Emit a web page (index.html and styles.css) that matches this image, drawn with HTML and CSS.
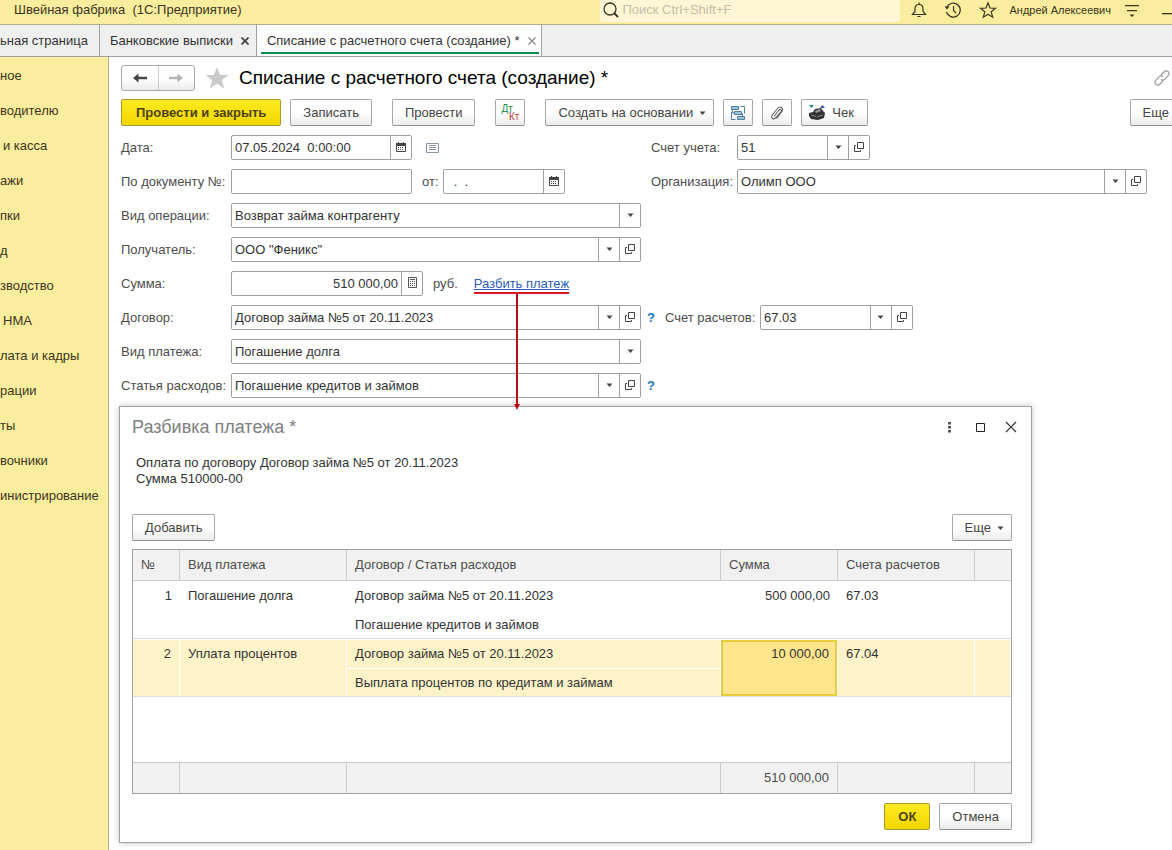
FILE: index.html
```html
<!DOCTYPE html>
<html lang="ru">
<head>
<meta charset="utf-8">
<title>Списание с расчетного счета (создание) *</title>
<link rel="stylesheet" href="styles.css">
</head>
<body>
<svg class="sprite" aria-hidden="true">
  <symbol id="i-down" viewBox="0 0 7 4"><path d="M0.5 0.5h6L3.5 4z" fill="#444"/></symbol>
  <symbol id="i-open" viewBox="0 0 10 10"><path d="M3.500 0.500h6v6h-6zM2 3.500H0.500v6h6V8" fill="none" stroke="#444"/></symbol>
  <symbol id="i-cal" viewBox="0 0 10 10"><path d="M0.500 1.500h9v8h-9z" fill="#fff" stroke="#444"/><path d="M0 1h10v3H0zM2 0h1v2H2zM7 0h1v2H7z" fill="#444"/><path d="M2 5h1v1H2zM4 5h1v1H4zM6 5h1v1H6zM2 7h1v1H2zM4 7h1v1H4zM6 7h1v1H6z" fill="#444"/></symbol>
</svg>

<header class="titlebar">
  <span class="app-name">Швейная фабрика&nbsp; (1С:Предприятие)</span>
  <label class="search">
    <svg width="18" height="18" viewBox="0 0 18 18" fill="none" stroke="#3a3520"><circle cx="8" cy="8" r="6" stroke-width="1.300"/><path d="M12 12l4 4" stroke-width="2"/></svg>
    <input type="search" placeholder="Поиск Ctrl+Shift+F" aria-label="Поиск">
  </label>
  <nav class="title-tools">
    <button class="plain" aria-label="Уведомления"><svg width="16" height="18" viewBox="0 0 16 18" fill="none" stroke="#3a3520" stroke-width="1.200"><path d="M1.500 13.500h13l-2.500-3V7.500C12 5 10.500 3.500 8 3.500S4 5 4 7.500v3z"/><path d="M8 1.500v2M6.500 15.500h3"/></svg></button>
    <button class="plain" aria-label="История"><svg width="18" height="18" viewBox="0 0 18 18" fill="none" stroke="#3a3520" stroke-width="1.200"><path d="M3 6a7 7 0 1 1-0.500 5"/><path d="M9.500 5v4.500l2.500 2.500"/><path d="M0.500 5.500h5L3 8.500z" fill="#3a3520" stroke="none"/></svg></button>
    <button class="plain" aria-label="Избранное"><svg width="18" height="18" viewBox="0 0 18 18" fill="none" stroke="#3a3520" stroke-width="1.200"><path d="M9 1.800l2 5.200 5.500 0.300-4.300 3.500 1.500 5.400L9 13.200l-4.700 3 1.500-5.400L1.500 7.300 7 7z"/></svg></button>
  </nav>
  <span class="user">Андрей Алексеевич</span>
  <button class="plain menu" aria-label="Сервис"><svg width="16" height="16" viewBox="0 0 16 16"><path d="M1 3h14v1.300H1zM3 8h10v1.300H3zM5.500 12.500h5L8 15z" fill="#3a3520"/></svg></button>
  <button class="plain minimize" aria-label="Свернуть"><svg width="12" height="16" viewBox="0 0 12 16"><path d="M2 11h10v1.300H2z" fill="#3a3520"/></svg></button>
</header>

<nav class="tabs">
  <a class="tab first" href="#">ьная страница</a>
  <span class="tab"><a href="#">Банковские выписки</a><button class="plain" aria-label="Закрыть вкладку"><svg width="8" height="8" viewBox="0 0 8 8"><path d="M0.500 0.500l7 7M7.500 0.500l-7 7" stroke="#444" stroke-width="1.800"/></svg></button></span>
  <span class="tab active"><a href="#">Списание с расчетного счета (создание) *</a><button class="plain" aria-label="Закрыть вкладку"><svg width="8" height="8" viewBox="0 0 8 8"><path d="M0.500 0.500l7 7M7.500 0.500l-7 7" stroke="#888" stroke-width="1.300"/></svg></button></span>
</nav>

<div class="body">
  <nav class="sidebar">
    <a href="#">ное</a>
    <a href="#">водителю</a>
    <a href="#" class="in">и касса</a>
    <a href="#">ажи</a>
    <a href="#">пки</a>
    <a href="#">д</a>
    <a href="#">зводство</a>
    <a href="#" class="in">НМА</a>
    <a href="#">лата и кадры</a>
    <a href="#">рации</a>
    <a href="#">ты</a>
    <a href="#">вочники</a>
    <a href="#">инистрирование</a>
  </nav>

  <main>
    <div class="heading">
      <div class="history">
        <button aria-label="Назад"><svg width="14" height="10" viewBox="0 0 14 10"><path d="M0 5l5.500-4.500v3.300H14v2.400H5.500v3.300z" fill="#444"/></svg></button>
        <button aria-label="Вперед"><svg width="14" height="10" viewBox="0 0 14 10"><path d="M14 5L8.500 0.500v3.300H0v2.400h8.500v3.300z" fill="#b5b5b5"/></svg></button>
      </div>
      <svg class="fav" width="24" height="22" viewBox="0 0 24 22"><path d="M12 0l3 8h8.500l-6.800 5.200 2.600 8.300L12 16.500l-7.300 5 2.600-8.300L0.500 8H9z" fill="#c9c9c9"/></svg>
      <h1>Списание с расчетного счета (создание) *</h1>
      <button class="plain link" aria-label="Ссылка"><svg width="16" height="18" viewBox="0 0 16 18" fill="none" stroke="#999" stroke-width="1.200"><path d="M7 6l3-3c1.500-1.500 3-1.500 4.200-0.300s1 2.800-0.300 4.200l-3 3.200c-1.400 1.400-2.900 1.200-3.900 0.400"/><path d="M9 12l-3 3c-1.400 1.400-3 1.400-4.200 0.300s-1-2.800 0.300-4.200l3-3.200C6.500 6.600 8 6.700 9 7.600"/></svg></button>
    </div>

    <div class="toolbar">
      <button class="btn primary">Провести и закрыть</button>
      <button class="btn">Записать</button>
      <button class="btn wide-gap">Провести</button>
      <button class="btn icon wide-gap" aria-label="Дт Кт"><span class="dtkt"><span class="dt">Дт</span><span class="kt">Кт</span></span></button>
      <button class="btn caret wide-gap">Создать на основании<svg width="7" height="4"><use href="#i-down"/></svg></button>
      <button class="btn icon" aria-label="Структура подчиненности"><svg width="16" height="16" viewBox="0 0 16 16" fill="#9cc4dd" stroke="#4d7f9f"><path d="M1.500 1.500h7v3h-7zM4.500 6.500h7v3h-7zM7.500 11.500h7v3h-7z"/><path d="M10.500 1.500h4v7M1.500 7v7.500h4M2.500 5v3h2M11.500 8.500h1v3" fill="none"/></svg></button>
      <button class="btn icon" aria-label="Файлы"><svg width="14" height="16" viewBox="0 0 14 16" fill="none" stroke="#666" stroke-width="1.100"><path d="M4 11.500l5-6.500c1.500-1.500 3 0 2 1.500L5.500 13C3.500 15 0.500 13 2 10.500L7.500 3.500c2.500-3.200 6.500-0.500 4.500 3l-5.500 7.200"/></svg></button>
      <button class="btn check"><svg width="18" height="18" viewBox="0 0 18 18"><path d="M1 1h5L3.500 4z" fill="#2a9060"/><path d="M12 4h5L14.500 1z" fill="#39549a"/><path d="M1 9l4-1 2-3 6-1 2 3 2 2-1 5-6 2-7-1-2-3z" fill="#333"/><path d="M7 7l5-2 1 2-5 2z" fill="#999"/><path d="M3 11l5 1.500M9 13l6-2" stroke="#888"/></svg>Чек</button>
      <button class="btn more-main">Еще</button>
    </div>

    <form class="form">
      <div class="row">
        <div class="left">
          <label for="date">Дата:</label>
          <div class="field w-date"><input id="date" value="07.05.2024  0:00:00"><button type="button" aria-label="Календарь"><svg width="10" height="10"><use href="#i-cal"/></svg></button></div>
          <svg class="note" width="13" height="10" viewBox="0 0 13 10"><path d="M0.500 0.500h12v9h-12z" fill="#fff" stroke="#8593a0"/><path d="M3 2.500h7M3 4.500h7M3 6.500h7" stroke="#8593a0"/></svg>
        </div>
        <label class="side" for="account">Счет учета:</label>
        <div class="field w-account"><input id="account" value="51"><button type="button" aria-label="Выбрать"><svg width="7" height="4"><use href="#i-down"/></svg></button><button type="button" aria-label="Открыть"><svg width="10" height="10"><use href="#i-open"/></svg></button></div>
      </div>

      <div class="row">
        <div class="left">
          <label for="docnum">По документу №:</label>
          <div class="field w-date"><input id="docnum"></div>
          <label class="from" for="docdate">от:</label>
          <div class="field w-from"><input id="docdate" value="  .  ."><button type="button" aria-label="Календарь"><svg width="10" height="10"><use href="#i-cal"/></svg></button></div>
        </div>
        <label class="side" for="org">Организация:</label>
        <div class="field grow"><input id="org" value="Олимп ООО"><button type="button" aria-label="Выбрать"><svg width="7" height="4"><use href="#i-down"/></svg></button><button type="button" aria-label="Открыть"><svg width="10" height="10"><use href="#i-open"/></svg></button></div>
      </div>

      <div class="row">
        <div class="left">
          <label for="optype">Вид операции:</label>
          <div class="field grow"><select id="optype"><option>Возврат займа контрагенту</option></select><span class="arrow"><svg width="7" height="4"><use href="#i-down"/></svg></span></div>
        </div>
      </div>

      <div class="row">
        <div class="left">
          <label for="payee">Получатель:</label>
          <div class="field grow"><input id="payee" value="ООО &quot;Феникс&quot;"><button type="button" aria-label="Выбрать"><svg width="7" height="4"><use href="#i-down"/></svg></button><button type="button" aria-label="Открыть"><svg width="10" height="10"><use href="#i-open"/></svg></button></div>
        </div>
      </div>

      <div class="row">
        <div class="left">
          <label for="sum">Сумма:</label>
          <div class="field w-sum"><input id="sum" class="num" value="510 000,00"><button type="button" aria-label="Калькулятор"><svg width="9" height="11" viewBox="0 0 9 11"><path d="M0.500 0.500h8v10h-8z" fill="none" stroke="#555"/><path d="M2 4.500h5M2 6.500h5M2 8.500h5" stroke="#555" stroke-dasharray="1 1"/><path d="M2 2.500h5" stroke="#555"/></svg></button></div>
          <span class="unit">руб.</span>
          <a class="split" href="#split">Разбить платеж
            <svg class="pointer" width="8" height="118" viewBox="0 0 8 118"><path d="M3 0h2v112H3z" fill="#b80d18"/><path d="M1 111h6L4 117z" fill="#b80d18"/></svg>
          </a>
        </div>
      </div>

      <div class="row">
        <div class="left">
          <label for="contract">Договор:</label>
          <div class="field grow"><input id="contract" value="Договор займа №5 от 20.11.2023"><button type="button" aria-label="Выбрать"><svg width="7" height="4"><use href="#i-down"/></svg></button><button type="button" aria-label="Открыть"><svg width="10" height="10"><use href="#i-open"/></svg></button></div>
        </div>
        <a class="help" href="#">?</a>
        <label class="side settle" for="settle">Счет расчетов:</label>
        <div class="field w-settle"><input id="settle" value="67.03"><button type="button" aria-label="Выбрать"><svg width="7" height="4"><use href="#i-down"/></svg></button><button type="button" aria-label="Открыть"><svg width="10" height="10"><use href="#i-open"/></svg></button></div>
      </div>

      <div class="row">
        <div class="left">
          <label for="paytype">Вид платежа:</label>
          <div class="field grow"><select id="paytype"><option>Погашение долга</option></select><span class="arrow"><svg width="7" height="4"><use href="#i-down"/></svg></span></div>
        </div>
      </div>

      <div class="row">
        <div class="left">
          <label for="item">Статья расходов:</label>
          <div class="field grow"><input id="item" value="Погашение кредитов и займов"><button type="button" aria-label="Выбрать"><svg width="7" height="4"><use href="#i-down"/></svg></button><button type="button" aria-label="Открыть"><svg width="10" height="10"><use href="#i-open"/></svg></button></div>
        </div>
        <a class="help" href="#">?</a>
      </div>
    </form>

    <section class="dialog" id="split" role="dialog" aria-labelledby="dlg-title">
      <div class="dlg-head">
        <h2 id="dlg-title">Разбивка платежа *</h2>
        <button class="plain" aria-label="Меню"><svg width="12" height="12" viewBox="0 0 12 12" fill="#555"><path d="M5 1h3v2.500H5zM5 5h3v2.500H5zM5 9h3v2.500H5z"/></svg></button>
        <button class="plain" aria-label="Развернуть"><svg width="12" height="12" viewBox="0 0 12 12"><path d="M2.500 2.500h8v8h-8z" fill="none" stroke="#222"/></svg></button>
        <button class="plain" aria-label="Закрыть"><svg width="12" height="12" viewBox="0 0 12 12"><path d="M1 1l10 10M11 1L1 11" stroke="#333" stroke-width="1.200"/></svg></button>
      </div>
      <p>Оплата по договору Договор займа №5 от 20.11.2023<br>Сумма 510000-00</p>
      <div class="dlg-bar">
        <button class="btn">Добавить</button>
        <button class="btn caret">Еще<svg width="7" height="4"><use href="#i-down"/></svg></button>
      </div>
      <table>
        <colgroup><col class="c-n"><col class="c-type"><col><col class="c-sum"><col class="c-acc"><col class="c-end"></colgroup>
        <thead><tr><th>№</th><th>Вид платежа</th><th>Договор / Статья расходов</th><th>Сумма</th><th>Счета расчетов</th><th></th></tr></thead>
        <tbody>
          <tr><td class="num">1</td><td>Погашение долга</td><td class="pair"><div>Договор займа №5 от 20.11.2023</div><div>Погашение кредитов и займов</div></td><td class="num">500 000,00</td><td>67.03</td><td></td></tr>
          <tr class="selected"><td class="num">2</td><td>Уплата процентов</td><td class="pair"><div>Договор займа №5 от 20.11.2023</div><div>Выплата процентов по кредитам и займам</div></td><td class="num current">10 000,00</td><td>67.04</td><td></td></tr>
          <tr class="filler"><td colspan="6"></td></tr>
        </tbody>
        <tfoot><tr><td></td><td></td><td></td><td class="num">510 000,00</td><td></td><td></td></tr></tfoot>
      </table>
      <div class="dlg-foot">
        <button class="btn primary">ОК</button>
        <button class="btn">Отмена</button>
      </div>
    </section>
  </main>
</div>
</body>
</html>
```
FILE: styles.css
```css
* { box-sizing: border-box; }
html, body { height: 100%; }
body {
  margin: 0;
  display: flex;
  flex-direction: column;
  overflow: hidden;
  background: #fff;
  color: #333;
  font: 13px/16px "Liberation Sans", Arial, sans-serif;
}
button, input, select { font: inherit; color: inherit; }
a { color: inherit; text-decoration: none; }
svg { display: block; flex: none; }
.sprite { position: absolute; width: 0; height: 0; }
.plain { border: 0; padding: 0; background: none; display: flex; }

/* Title bar */
.titlebar {
  display: flex;
  align-items: center;
  height: 25px;
  padding: 0 0 4px 14px;
  background: #fbed9e;
  border-bottom: 1px solid #b5ae84;
  color: #3a3520;
  overflow: hidden;
}
.app-name { flex: 1; white-space: nowrap; }
.search {
  display: flex;
  align-items: center;
  width: 300px;
  height: 24px;
  padding-left: 2px;
  background: #fef6d5;
  border-radius: 3px;
}
.search input { flex: 1; min-width: 0; border: 0; background: none; padding: 0 2px; outline: 0; }
.search input::placeholder { color: #c4bfa8; }
.title-tools { display: flex; gap: 17px; margin: 0 12px 0 11px; }
.user { font-size: 11px; white-space: nowrap; }
.menu { margin: 0 20px 0 13px; }

/* Window tabs */
.tabs {
  display: flex;
  height: 32px;
  background: #f0f0f0;
  border-bottom: 1px solid #a0a0a0;
  white-space: nowrap;
}
.tab {
  display: flex;
  align-items: center;
  gap: 8px;
  padding: 0 7px 0 10px;
  border-right: 1px solid #a0a0a0;
}
.tab.first { padding: 0 11px 0 0; }
.tab.active {
  padding: 0 5px 0 8px;
  background: #fff linear-gradient(#0d8f4f, #0d8f4f) no-repeat 50% 27px / calc(100% - 4px) 2px;
  border-left: 2px solid #fff;
}

.body { display: flex; flex: 1; min-height: 0; }
.sidebar {
  width: 109px;
  flex: none;
  padding-top: 1px;
  background: #fbed9e;
  border-right: 1px solid #b5ae84;
  color: #3a3520;
  white-space: nowrap;
}
.sidebar a { display: block; line-height: 35px; }
.sidebar .in { padding-left: 3px; }

main { position: relative; flex: 1; min-width: 0; padding: 8px 0 0 12px; overflow: hidden; }
.heading { display: flex; align-items: center; height: 26px; }
.history { display: flex; width: 74px; height: 26px; border: 1px solid #a8a8a8; border-radius: 3px; background: linear-gradient(#fff 50%, #ececec); }
.history button { flex: 1; display: flex; align-items: center; justify-content: center; padding: 0; border: 0; background: none; }
.history button + button { border-left: 1px solid #ccc; }
.fav { margin: 0 10px; }
h1 { flex: 1; margin: 0; color: #000; font-size: 19px; font-weight: normal; line-height: 24px; }
.link { margin-right: 2px; }

/* Buttons */
.btn {
  display: flex;
  align-items: center;
  justify-content: center;
  height: 27px;
  padding: 0 12px;
  border: 1px solid #a8a8a8;
  border-bottom-color: #909090;
  border-radius: 2px;
  background: linear-gradient(#fff 50%, #ebebeb);
  color: #444;
  white-space: nowrap;
}
.btn.primary { padding: 0 13px; background: linear-gradient(#ffeb1f, #f2d600); border-color: #a8982a; color: #4d4210; font-weight: bold; }
.btn.icon { width: 30px; padding: 0; }
.btn.caret { gap: 6px; padding-right: 7px; }
.toolbar { display: flex; gap: 9px; margin: 8px -30px 9px 0; }
.toolbar .primary { padding: 0 14px; }
.wide-gap { margin-left: 11px; }
.btn.check { gap: 6px; padding: 0 13px 0 6px; }
.more-main { margin-left: auto; padding-right: 32px; }
.dtkt { display: flex; flex-direction: column; width: 18px; font-size: 10px; line-height: 8px; }
.dt { align-self: flex-start; color: #1a8a4a; }
.kt { align-self: flex-end; color: #c43c3c; }

/* Document form */
.form { display: flex; flex-direction: column; gap: 9px; margin-right: 25px; }
.row { display: flex; align-items: center; height: 25px; }
.left { display: flex; align-items: center; width: 520px; flex: none; }
.left > label:first-child { width: 110px; flex: none; }
label, .unit { color: #4d4d4d; white-space: nowrap; }
.field { display: flex; height: 25px; border: 1px solid #a0a0a0; border-radius: 2px; background: #fff; }
.field input, .field select {
  flex: 1;
  min-width: 0;
  padding: 0 3px;
  border: 0;
  outline: 0;
  background: none;
  appearance: none;
  white-space: pre;
}
.field button, .arrow {
  display: flex;
  align-items: center;
  justify-content: center;
  width: 21px;
  padding: 0 0 2px;
  border: 0;
  border-left: 1px solid #a0a0a0;
  background: none;
}
.grow { flex: 1; }
.w-date { width: 181px; }
.w-from { width: 122px; }
.w-account { width: 133px; }
.w-sum { width: 192px; }
.w-settle { width: 153px; }
.num { text-align: right; }
.note { margin-left: 14px; }
.from { margin: 0 4px 0 10px; }
.side { width: 86px; margin-left: 10px; }
.settle { width: 95px; margin-left: 10px; }
.help { margin-left: 6px; color: #1677b8; font-weight: bold; }
.unit { margin: 0 16px 0 10px; }
.split { position: relative; color: #2a5db8; box-shadow: 0 2px #e0141e; text-decoration: underline; white-space: nowrap; }
.pointer { position: absolute; top: 17px; left: 39px; z-index: 2; }

/* Payment split window */
.dialog {
  position: absolute;
  top: 349px;
  left: 10px;
  width: 913px;
  padding: 8px 19px 12px 12px;
  background: #fff;
  border: 1px solid #a0a0a0;
  box-shadow: 0 0 6px rgba(0, 0, 0, 0.25);
}
.dlg-head { display: flex; align-items: center; gap: 19px; height: 24px; margin-right: -5px; }
h2 { flex: 1; margin: 0; color: #808080; font-size: 18px; font-weight: normal; }
.dialog p { margin: 16px 4px 27px; }
.dlg-bar { display: flex; justify-content: space-between; margin-bottom: 8px; }
table { width: 100%; table-layout: fixed; border-collapse: separate; border-spacing: 0; border: 1px solid #a0a0a0; }
.c-n { width: 47px; }
.c-type { width: 167px; }
.c-sum { width: 117px; }
.c-acc { width: 137px; }
.c-end { width: 36px; }
th, td { padding: 0 8px; text-align: left; font-weight: normal; white-space: nowrap; }
th, tfoot td { height: 31px; background: #f1f1f1; border-right: 1px solid #ccc; color: #4d4d4d; }
th { border-bottom: 1px solid #ccc; }
tfoot td { border-top: 1px solid #ccc; }
th:last-child, td:last-child { border-right: 0; }
tbody td { height: 58px; padding-top: 7px; vertical-align: top; border-bottom: 1px solid #ddd; }
td.num { text-align: right; }
tbody td.pair { padding: 0; }
.pair div { height: 29px; padding: 7px 8px 0; }
.pair div + div { height: 28px; }
.selected td { background: #fef3c8; border-right: 1px solid #fff; border-top: 1px solid #fff; padding-top: 6px; }
.selected .pair div { height: 28px; padding-top: 6px; }
.selected .pair div + div { border-top: 1px solid #fff; }
.selected .current { background: #ffe58c; box-shadow: inset 0 0 0 2px #ebcb3d; }
tbody .filler td { height: 65px; padding: 0; border: 0; }
.dlg-foot { display: flex; justify-content: flex-end; gap: 9px; margin-top: 9px; }
```
